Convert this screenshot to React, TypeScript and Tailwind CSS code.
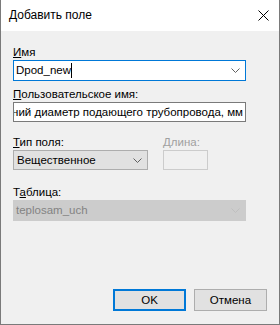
import React from 'react';

function Chevron({ color = '#606060' }: { color?: string }) {
  return (
    <svg width="9" height="5" viewBox="0 0 9 5" className="shrink-0">
      <polyline points="0.5,0.5 4.5,4.5 8.5,0.5" fill="none" stroke={color} strokeWidth="1" />
    </svg>
  );
}

function Label({ children, disabled }: { children: React.ReactNode; disabled?: boolean }) {
  return (
    <div className={`h-[15px] leading-[15px] ${disabled ? 'text-[#a0a0a0]' : 'text-black'}`}>
      {children}
    </div>
  );
}

export default function App() {
  return (
    <div
      className="w-[280px] h-[325px] flex flex-col border-x border-b border-[#7a7a7a] bg-[#f0f0f0] text-[11.5px] text-black overflow-hidden"
      style={{ fontFamily: '"Liberation Sans", Arial, sans-serif' }}
    >
      {/* title bar */}
      <div className="h-[31px] shrink-0 bg-white flex items-center justify-between pl-[8px] pr-[10px]">
        <span className="leading-[15px] text-[12px]">Добавить поле</span>
        <svg width="11" height="11" viewBox="0 0 11 11">
          <path d="M0.5 0.5 L10.5 10.5 M10.5 0.5 L0.5 10.5" stroke="#000" strokeWidth="1" />
        </svg>
      </div>

      <div className="flex-1 flex flex-col px-[12px] pt-[14px] pb-[13px]">
        <Label>
          <span className="underline">И</span>мя
        </Label>
        <div className="h-[21px] w-[233px] border border-[#0078d7] bg-white flex items-center pl-[2px] pr-[5px]">
          <span className="leading-[15px]">Dpod_new</span>
          <span className="w-px h-[15px] bg-black" />
          <span className="flex-1" />
          <Chevron />
        </div>

        <div className="mt-[6px]">
          <Label>
            <span className="underline">П</span>ользовательское имя:
          </Label>
        </div>
        <div className="h-[20px] w-[233px] border border-[#7a7a7a] bg-white flex items-center justify-end overflow-hidden pr-[2px] whitespace-nowrap">
          <span className="leading-[15px]">Внутренний диаметр подающего трубопровода, мм</span>
        </div>

        <div className="mt-[13px] flex gap-[15px]">
          <div className="flex flex-col">
            <Label>
              <span className="underline">Т</span>ип поля:
            </Label>
            <div className="h-[20px] w-[135px] border border-[#adadad] bg-[#e1e1e1] flex items-center justify-between pl-[3px] pr-[5px]">
              <span className="leading-[15px]">Вещественное</span>
              <Chevron />
            </div>
          </div>
          <div className="flex flex-col">
            <Label disabled>
              <span className="underline">Д</span>лина:
            </Label>
            <div className="h-[20px] w-[45px] border border-[#cccccc] bg-[#f0f0f0]" />
          </div>
        </div>

        <div className="mt-[15px]">
          <Label>
            Т<span className="underline">а</span>блица:
          </Label>
        </div>
        <div className="h-[21px] w-[233px] border border-[#cccccc] bg-[#cccccc] flex items-center justify-between pl-[2px] pr-[5px]">
          <span className="leading-[15px] text-[#838383]">teplosam_uch</span>
          <Chevron color="#bfbfbf" />
        </div>

        <div className="mt-auto flex justify-end gap-[8px]">
          <button className="h-[22px] w-[73px] border-2 border-[#0078d7] bg-[#e1e1e1] leading-[15px]">OK</button>
          <button className="h-[22px] w-[73px] border border-[#adadad] bg-[#e1e1e1] leading-[15px]">Отмена</button>
        </div>
      </div>
    </div>
  );
}
